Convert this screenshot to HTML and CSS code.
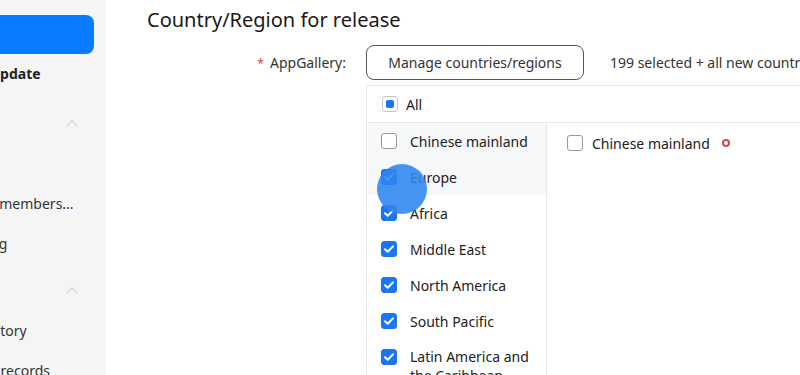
FILE: index.html
```html
<!DOCTYPE html>
<html lang="en">
<head>
    <meta charset="UTF-8">
    <title>Country/Region for release</title>
    <link rel="stylesheet" href="styles.css">
</head>
<body>
    <div class="page">
        <!-- side menu -->
        <div class="side">
            <ul class="side_inner">
                <li class="side_item side_top">Custom domain...</li>
                <li class="side_btn"><span class="blind">Release</span></li>
                <li class="side_item side_bold">App update</li>
                <li class="side_group">Beta<span class="chev"></span></li>
                <li class="side_item">Test</li>
                <li class="side_item">Team members...</li>
                <li class="side_item">Testing</li>
                <li class="side_group side_group2">Logs<span class="chev"></span></li>
                <li class="side_item">Ad history</li>
                <li class="side_item">Trade records</li>
            </ul>
        </div>
        <!--// side menu -->

        <div class="main">
            <h2 class="title">Country/Region for release</h2>

            <div class="form_row">
                <label class="form_label"><em class="req">*</em>AppGallery:</label>
                <button class="btn_manage">Manage countries/regions</button>
                <span class="summary">199 selected + all new countries/regions</span>
            </div>

            <div class="picker">
                <div class="picker_head">
                    <span class="chk chk_part"></span>
                    <span class="chk_txt">All</span>
                </div>
                <div class="picker_body">
                    <ul class="region_list">
                        <li class="region on"><span class="chk"></span><span class="chk_txt">Chinese mainland</span></li>
                        <li class="region on"><span class="chk chk_on"></span><span class="chk_txt">Europe</span></li>
                        <li class="region"><span class="chk chk_on"></span><span class="chk_txt">Africa</span></li>
                        <li class="region"><span class="chk chk_on"></span><span class="chk_txt">Middle East</span></li>
                        <li class="region"><span class="chk chk_on"></span><span class="chk_txt">North America</span></li>
                        <li class="region"><span class="chk chk_on"></span><span class="chk_txt">South Pacific</span></li>
                        <li class="region region_long"><span class="chk chk_on"></span><span class="chk_txt">Latin America and the Caribbean</span></li>
                        <li class="touch"></li>
                    </ul>
                    <div class="country_list">
                        <div class="country">
                            <span class="chk"></span>
                            <span class="chk_txt">Chinese mainland</span>
                            <span class="dot"></span>
                        </div>
                    </div>
                </div>
            </div>
        </div>
    </div>
</body>
</html>
```

FILE: styles.css
```css
html, body, div, span, h2, ul, li, em, label{
    margin: 0;
    padding: 0;
    border: 0;
}
html, body{
    height: 100%;
}
body{
    font-family: "Noto Sans", "Liberation Sans", sans-serif;
    font-size: 14px;
    color: #222;
    background-color: #fff;
    overflow: hidden;
}
ul{
    list-style: none;
}
em{
    font-style: normal;
}
.blind{
    overflow: hidden;
    position: absolute;
    clip: rect(0 0 0 0);
    width: 1px;
    height: 1px;
    margin: -1px;
}
.page{
    display: flex;
    height: 100%;
}

/* side menu */
.side{
    flex: 0 0 106px;
    overflow: hidden;
    background-color: #f5f5f5;
}
.side_inner{
    width: 166px;
    margin: -16px 0 0 -60px;
}
.side_item{
    display: flex;
    align-items: center;
    height: 40px;
    padding-left: 20px;
    white-space: nowrap;
    color: #333;
}
.side_top{
    height: 20px;
}
.side_bold{
    height: 39px;
    font-weight: 700;
    color: #222;
}
.side_btn{
    height: 39px;
    margin: 11px 12px 0 10px;
    border-radius: 8px;
    background-color: #0a7cff;
}
.side_group{
    display: flex;
    align-items: center;
    justify-content: space-between;
    height: 40px;
    margin-top: 10px;
    padding: 0 30px 0 20px;
    color: #999;
    font-size: 12px;
}
.side_group2{
    margin-top: 7px;
}
.chev{
    width: 7px;
    height: 7px;
    margin-top: 6px;
    border-top: 1px solid #cbcbcb;
    border-left: 1px solid #cbcbcb;
    transform: rotate(45deg);
}

/* main */
.main{
    flex: 1;
    min-width: 0;
    overflow: hidden;
    padding: 6px 0 0 41px;
}
.title{
    font-size: 20px;
    font-weight: 400;
    line-height: 27px;
    color: #191919;
}
.form_row{
    display: flex;
    align-items: center;
    margin-top: 12px;
    white-space: nowrap;
}
.form_row > *{
    flex: none;
}
.form_label{
    width: 199px;
    text-align: right;
    color: #333;
}
.req{
    margin-right: 6px;
    color: #e0464e;
    font-size: 12px;
}
.btn_manage{
    width: 218px;
    height: 35px;
    margin-left: 20px;
    border: 1px solid #555;
    border-radius: 8px;
    background: #fff;
    font-family: inherit;
    font-size: 14px;
    color: #333;
}
.summary{
    margin-left: 26px;
    color: #333;
}

/* picker */
.picker{
    width: 640px;
    margin: 5px 0 0 219px;
    border: 1px solid #e8e8e8;
    border-right: 0;
}
.picker_head{
    display: flex;
    align-items: center;
    height: 36px;
    padding-left: 15px;
    border-bottom: 1px solid #e8e8e8;
}
.picker_head .chk_txt{
    margin-left: 8px;
}
.picker_body{
    display: flex;
}
.region_list{
    position: relative;
    flex: none;
    width: 179px;
    border-right: 1px solid #e8e8e8;
}
.region{
    display: flex;
    align-items: center;
    height: 36px;
    padding-left: 14px;
    line-height: 19px;
}
.region.on{
    background-color: #f6f7f9;
}
.region .chk_txt{
    margin-left: 13px;
}
.region_long{
    align-items: flex-start;
    height: auto;
    padding-top: 8px;
}
.region_long .chk{
    margin-top: 2px;
}
.region_long .chk_txt{
    white-space: normal;
}
.chk{
    flex: 0 0 auto;
    box-sizing: border-box;
    width: 16px;
    height: 16px;
    border: 1px solid #9a9a9a;
    border-radius: 3px;
    background-color: #fff;
}
.chk_on{
    border-color: #1a76f5;
    background: #1a76f5 url("data:image/svg+xml,%3Csvg xmlns='http://www.w3.org/2000/svg' viewBox='0 0 16 16'%3E%3Cpath d='M4 8.2l2.7 2.6L12 5.4' fill='none' stroke='%23fff' stroke-width='2' stroke-linecap='round' stroke-linejoin='round'/%3E%3C/svg%3E") center/16px 16px no-repeat;
}
.chk_part{
    position: relative;
    border-color: #c4c4c4;
}
.chk_part:after{
    position: absolute;
    top: 3px;
    left: 3px;
    width: 8px;
    height: 8px;
    border-radius: 2px;
    background-color: #1a76f5;
    content: "";
}
.chk_txt{
    color: #222;
    white-space: nowrap;
}
.touch{
    position: absolute;
    top: 41px;
    left: 10px;
    width: 50px;
    height: 50px;
    border-radius: 50%;
    background-color: rgba(45, 134, 240, 0.88);
}
.country_list{
    flex: 1;
    padding: 10px 0 0 20px;
}
.country{
    display: flex;
    align-items: center;
    height: 20px;
}
.country .chk_txt{
    margin-left: 9px;
}
.dot{
    box-sizing: border-box;
    width: 8px;
    height: 8px;
    margin-left: 12px;
    border: 2px solid #cf4a4f;
    border-radius: 50%;
}
```
